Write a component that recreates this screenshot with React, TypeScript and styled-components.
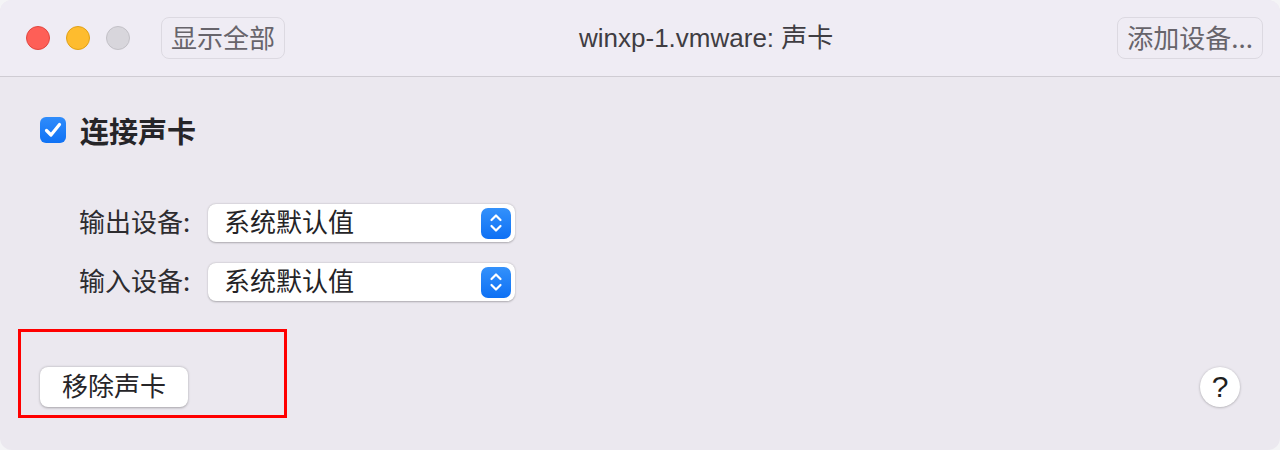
import React from 'react';
import styled, { createGlobalStyle } from 'styled-components';

const GlobalStyle = createGlobalStyle`
	html, body {
		margin: 0;
		padding: 0;
		background: #f4f4f6;
	}
	body {
		font-family: "Liberation Sans", "Noto Sans CJK SC", sans-serif;
	}
`;

const Window = styled.div`
	width: 1280px;
	height: 450px;
	box-sizing: border-box;
	border-radius: 12px;
	overflow: hidden;
	background: #ebe8ef;
	display: flex;
	flex-direction: column;
`;

const TitleBar = styled.div`
	height: 76px;
	flex-shrink: 0;
	background: #efecf4;
	border-bottom: 1px solid #cfccd3;
	display: flex;
	align-items: center;
	padding: 0 17px 0 26px;
`;

const Lights = styled.div`
	display: flex;
	gap: 16px;
	margin-right: 31px;
`;

const Light = styled.span<{ color: string; edge: string }>`
	width: 24px;
	height: 24px;
	border-radius: 50%;
	box-sizing: border-box;
	background: ${(p) => p.color};
	border: 1px solid ${(p) => p.edge};
`;

const ToolButton = styled.button`
	height: 42px;
	padding: 0 9px 3px;
	box-sizing: border-box;
	border: 1px solid #dcd9e1;
	border-radius: 8px;
	background: transparent;
	color: #67646b;
	font-family: "Noto Sans CJK SC", sans-serif;
	font-size: 26px;
	line-height: 1;
	display: flex;
	align-items: center;
	white-space: nowrap;
`;

const Title = styled.div`
	flex: 1;
	text-align: center;
	font-size: 26px;
	line-height: 1;
	padding: 0 0 0 10px;
	color: #3f3d42;
	font-family: "Liberation Sans", "Noto Sans CJK SC", sans-serif;
`;

const Content = styled.div`
	flex: 1;
	display: flex;
	flex-direction: column;
	padding: 40px 40px 0 40px;
`;

const CheckRow = styled.label`
	display: flex;
	align-items: center;
	gap: 14px;
	height: 26px;
`;

const CheckBox = styled.span`
	width: 26px;
	height: 26px;
	border-radius: 6px;
	background: linear-gradient(#2f8cfb, #0f72f5);
	display: flex;
	align-items: center;
	justify-content: center;
`;

const CheckLabel = styled.span`
	font-family: "Noto Sans CJK SC", sans-serif;
	font-weight: 700;
	font-size: 29px;
	line-height: 1;
	color: #262528;
`;

const Fields = styled.div`
	display: flex;
	flex-direction: column;
	gap: 21px;
	margin-top: 61px;
	padding-left: 39px;
`;

const FieldRow = styled.div`
	display: flex;
	align-items: center;
`;

const FieldLabel = styled.span`
	font-family: "Noto Sans CJK SC", sans-serif;
	font-size: 26px;
	line-height: 1;
	padding-bottom: 4px;
	color: #2d2c2f;
	width: 129px;
	white-space: nowrap;
`;

const Select = styled.div`
	width: 307px;
	height: 38px;
	box-sizing: border-box;
	background: #fff;
	border-radius: 8px;
	box-shadow: 0 0.5px 2px rgba(0, 0, 0, 0.28);
	display: flex;
	align-items: center;
	padding: 0 4px 0 16px;
`;

const SelectText = styled.span`
	flex: 1;
	font-family: "Noto Sans CJK SC", sans-serif;
	font-size: 26px;
	line-height: 1;
	padding-bottom: 4px;
	color: #242326;
`;

const Stepper = styled.span`
	width: 30px;
	height: 31px;
	border-radius: 7px;
	background: linear-gradient(#3391fb, #0e70f4);
	display: flex;
	align-items: center;
	justify-content: center;
`;

const BottomRow = styled.div`
	display: flex;
	align-items: flex-end;
	justify-content: space-between;
	margin-top: 28px;
	margin-left: -22px;
`;

const Highlight = styled.div`
	width: 269px;
	height: 89px;
	box-sizing: border-box;
	border: 3px solid #ff0000;
	padding: 35px 0 0 19px;
`;

const PushButton = styled.button`
	width: 148px;
	height: 40px;
	border: none;
	border-radius: 8px;
	background: #fff;
	box-shadow: 0 0.5px 2.5px rgba(0, 0, 0, 0.3);
	font-family: "Noto Sans CJK SC", sans-serif;
	font-size: 26px;
	line-height: 1;
	color: #262528;
	padding: 0 0 4px;
`;

const HelpButton = styled.button`
	width: 40px;
	height: 40px;
	border-radius: 50%;
	border: none;
	background: #fff;
	box-shadow: 0 0.5px 2.5px rgba(0, 0, 0, 0.3);
	font-family: "Liberation Sans", sans-serif;
	font-size: 30px;
	line-height: 1;
	color: #1e1e20;
	padding: 0;
	margin-bottom: 11px;
`;

const Chevrons = () => (
	<svg width="16" height="22" viewBox="0 0 16 22">
		<path d="M3.5 8 L8 3.5 L12.5 8" fill="none" stroke="#fff" strokeWidth="2.2" strokeLinecap="round" strokeLinejoin="round" />
		<path d="M3.5 14 L8 18.5 L12.5 14" fill="none" stroke="#fff" strokeWidth="2.2" strokeLinecap="round" strokeLinejoin="round" />
	</svg>
);

const Device = ({ label }: { label: string }) => (
	<FieldRow>
		<FieldLabel>{label}</FieldLabel>
		<Select>
			<SelectText>系统默认值</SelectText>
			<Stepper>
				<Chevrons />
			</Stepper>
		</Select>
	</FieldRow>
);

const App = () => {
	return (
		<>
			<GlobalStyle />
			<Window>
				<TitleBar>
					<Lights>
						<Light color="#fe5f57" edge="#e2463f" />
						<Light color="#febc2e" edge="#e1a116" />
						<Light color="#d8d6dc" edge="#c3c1c7" />
					</Lights>
					<ToolButton>显示全部</ToolButton>
					<Title>winxp-1.vmware: 声卡</Title>
					<ToolButton>添加设备...</ToolButton>
				</TitleBar>
				<Content>
					<CheckRow>
						<CheckBox>
							<svg width="22" height="22" viewBox="0 0 22 22">
								<path d="M4.5 11.5 L9 16 L17.5 5.5" fill="none" stroke="#fff" strokeWidth="3.2" strokeLinecap="round" strokeLinejoin="round" />
							</svg>
						</CheckBox>
						<CheckLabel>连接声卡</CheckLabel>
					</CheckRow>
					<Fields>
						<Device label="输出设备:" />
						<Device label="输入设备:" />
					</Fields>
					<BottomRow>
						<Highlight>
							<PushButton>移除声卡</PushButton>
						</Highlight>
						<HelpButton>?</HelpButton>
					</BottomRow>
				</Content>
			</Window>
		</>
	);
};

export default App;
